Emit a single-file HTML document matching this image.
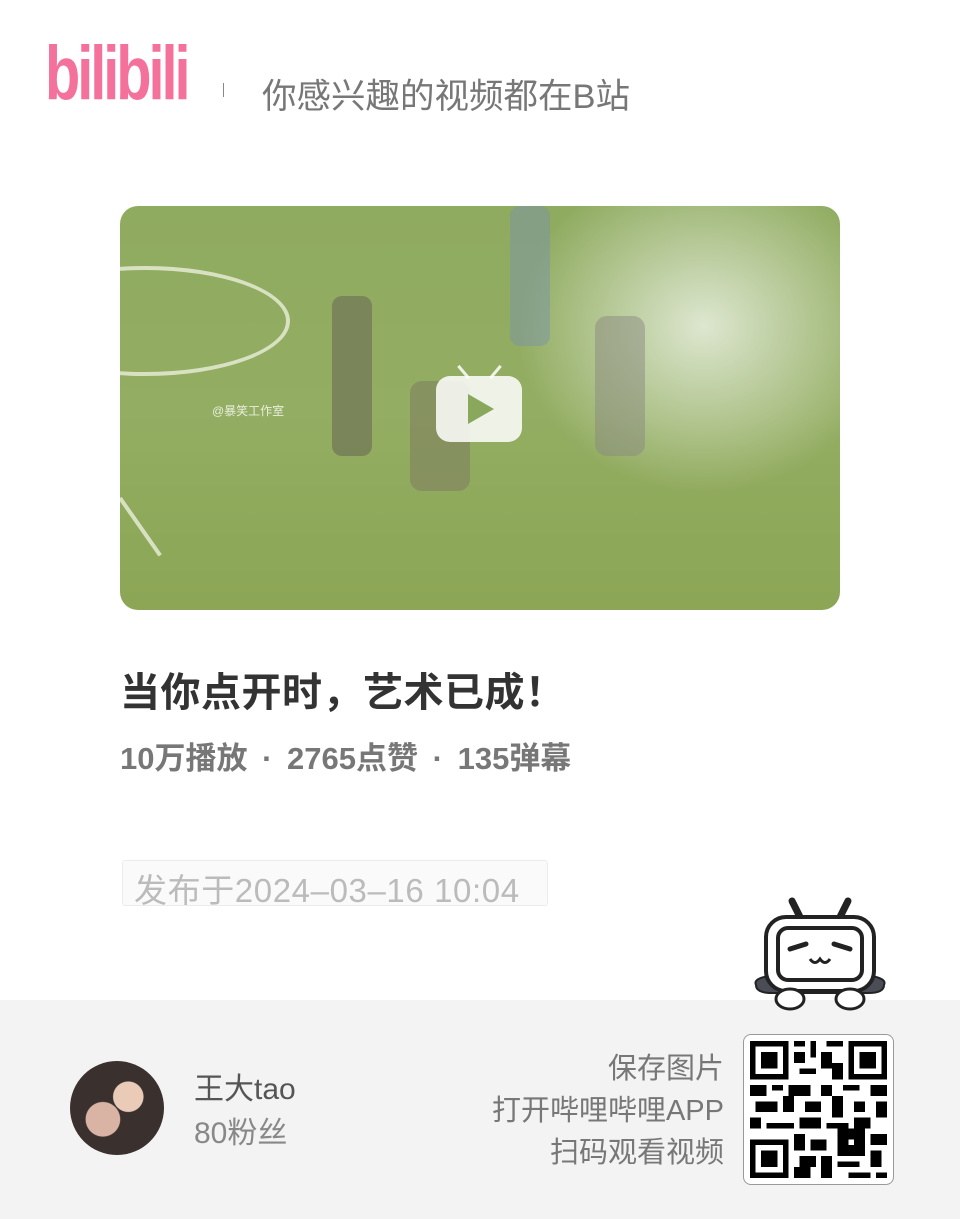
<!DOCTYPE html>
<html><head><meta charset="utf-8"><style>
*{margin:0;padding:0;box-sizing:border-box}
body{width:960px;height:1219px;background:#fff;position:relative;overflow:hidden;font-family:"Liberation Sans","Noto Sans CJK SC",sans-serif}
.a{position:absolute;white-space:nowrap}
</style></head><body>
<div class="a" style="left:45px;top:30px;font-size:76px;font-weight:bold;color:#f4719b;letter-spacing:-4px;font-family:'Liberation Sans',sans-serif;transform:scaleX(0.76);transform-origin:left top">bilibili</div>
<div class="a" style="left:223px;top:83px;width:1px;height:14px;background:#888"></div>
<div class="a" style="left:262px;top:68px;font-size:34.5px;color:#777">你感兴趣的视频都在B站</div>

<div class="a" style="left:120px;top:206px;width:720px;height:404px;border-radius:18px;overflow:hidden;background:linear-gradient(180deg,#8fab60 0%,#93ad62 50%,#8ca656 100%)">
 <div class="a" style="left:380px;top:0px;width:340px;height:300px;background:radial-gradient(ellipse at 60% 40%,rgba(240,245,235,.8),rgba(240,245,235,0) 65%)"></div>
 <div class="a" style="left:-120px;top:60px;width:290px;height:110px;border:4px solid #d8e2c2;border-radius:50%"></div>
 <div class="a" style="left:0;top:290px;width:70px;height:4px;background:#d8e2c2;transform:rotate(55deg);transform-origin:left"></div>
 <div class="a" style="left:212px;top:90px;width:40px;height:160px;background:#6b6a55;border-radius:10px;opacity:.6"></div>
 <div class="a" style="left:390px;top:0;width:40px;height:140px;background:#7a93a8;border-radius:10px;opacity:.5"></div>
 <div class="a" style="left:290px;top:175px;width:60px;height:110px;background:#7d7b60;border-radius:12px;opacity:.55"></div>
 <div class="a" style="left:475px;top:110px;width:50px;height:140px;background:#8a8a80;border-radius:12px;opacity:.5"></div>
 <div class="a" style="left:92px;top:196px;color:#e8eedd;font-size:12px">@暴笑工作室</div>
 <div class="a" style="left:316px;top:170px;width:86px;height:66px;background:rgba(255,255,255,.85);border-radius:14px"></div>
 <div class="a" style="left:342px;top:158px;width:3px;height:16px;background:rgba(255,255,255,.85);transform:rotate(-40deg)"></div>
 <div class="a" style="left:374px;top:158px;width:3px;height:16px;background:rgba(255,255,255,.85);transform:rotate(40deg)"></div>
 <div class="a" style="left:348px;top:188px;width:0;height:0;border-left:26px solid #8aa85b;border-top:15px solid transparent;border-bottom:15px solid transparent"></div>
</div>

<div class="a" style="left:120px;top:660px;font-size:40px;font-weight:bold;color:#333;letter-spacing:0.5px">当你点开时，艺术已成！</div>
<div class="a" style="left:120px;top:733px;font-size:31px;font-weight:bold;color:#777">10万播放 <span style="margin:0 6px">·</span> 2765点赞 <span style="margin:0 6px">·</span> 135弹幕</div>
<div class="a" style="left:122px;top:860px;width:426px;height:46px;border:1px solid #ececec;border-radius:3px;background:#fafafa"></div>
<div class="a" style="left:134px;top:864px;font-size:33px;color:#bbb;letter-spacing:0.6px">发布于2024–03–16 10:04</div>

<div class="a" style="left:0;top:1000px;width:960px;height:219px;background:#f3f3f3"></div>
<div class="a" style="left:70px;top:1061px;width:94px;height:94px;border-radius:50%;background:radial-gradient(circle at 62% 38%,#e9cbb8 0 18%,transparent 19%),radial-gradient(circle at 35% 62%,#d9b4a5 0 20%,transparent 21%),#3a302e"></div>
<div class="a" style="left:194px;top:1064px;font-size:30px;color:#555">王大tao</div>
<div class="a" style="left:194px;top:1108px;font-size:30px;color:#888">80粉丝</div>
<div class="a" style="right:236px;top:1048px;font-size:29px;color:#777;text-align:right;line-height:42px">保存图片<br>打开哔哩哔哩APP<br>扫码观看视频</div>

<svg class="a" style="left:748px;top:893px" width="144" height="122" viewBox="0 0 144 122">
 <path d="M44 8 L54 28 M100 8 L90 28" stroke="#222" stroke-width="7" stroke-linecap="round"/>
 <path d="M8 92 Q4 84 30 82 L114 82 Q140 84 136 92 Q136 100 120 100 L24 100 Q8 100 8 92Z" fill="#4a4d55" stroke="#222" stroke-width="2"/>
 <rect x="18" y="24" width="108" height="74" rx="20" fill="#fff" stroke="#222" stroke-width="4"/>
 <rect x="30" y="35" width="84" height="52" rx="10" fill="#fff" stroke="#222" stroke-width="4"/>
 <path d="M42 56 L58 51 M86 51 L102 56" stroke="#222" stroke-width="5" stroke-linecap="round"/>
 <path d="M62 66 q5 7 10 0 q5 7 10 0" stroke="#222" stroke-width="3" fill="none"/>
 <ellipse cx="42" cy="106" rx="14" ry="10" fill="#fff" stroke="#222" stroke-width="3"/>
 <ellipse cx="102" cy="106" rx="14" ry="10" fill="#fff" stroke="#222" stroke-width="3"/>
</svg>

<div class="a" style="left:743px;top:1034px;width:151px;height:151px;border:1px solid #999;border-radius:8px;background:#fff"></div>
<svg class="a" style="left:750px;top:1041px" width="137" height="137" viewBox="0 0 25 25" shape-rendering="crispEdges">
 <g fill="#000">
 <path d="M0 0h7v7h-7zM1 1v5h5v-5zM2 2h3v3h-3z" fill-rule="evenodd"/>
 <path d="M18 0h7v7h-7zM19 1v5h5v-5zM20 2h3v3h-3z" fill-rule="evenodd"/>
 <path d="M0 18h7v7h-7zM1 19v5h5v-5zM2 20h3v3h-3z" fill-rule="evenodd"/>
 <rect x="8" y="0" width="2" height="1"/><rect x="11" y="0" width="1" height="3"/><rect x="14" y="0" width="3" height="1"/>
 <rect x="8" y="2" width="2" height="2"/><rect x="13" y="2" width="2" height="3"/><rect x="9" y="5" width="3" height="1"/><rect x="15" y="4" width="2" height="3"/>
 <rect x="0" y="8" width="3" height="2"/><rect x="4" y="8" width="2" height="1"/><rect x="7" y="8" width="4" height="2"/><rect x="13" y="8" width="2" height="2"/><rect x="17" y="8" width="3" height="1"/><rect x="22" y="8" width="3" height="2"/>
 <rect x="1" y="11" width="4" height="2"/><rect x="6" y="10" width="2" height="3"/><rect x="10" y="11" width="3" height="2"/><rect x="15" y="10" width="2" height="4"/><rect x="19" y="11" width="2" height="2"/><rect x="23" y="11" width="2" height="3"/>
 <rect x="0" y="14" width="2" height="2"/><rect x="3" y="15" width="5" height="1"/><rect x="9" y="14" width="4" height="2"/><rect x="14" y="15" width="4" height="1"/><rect x="19" y="14" width="3" height="2"/>
 <rect x="8" y="17" width="2" height="3"/><rect x="11" y="18" width="3" height="2"/><rect x="16" y="16" width="5" height="5"/><rect x="22" y="17" width="3" height="2"/>
 <rect x="9" y="21" width="3" height="2"/><rect x="13" y="21" width="2" height="4"/><rect x="22" y="20" width="2" height="3"/><rect x="8" y="23" width="3" height="2"/><rect x="16" y="22" width="4" height="1"/><rect x="18" y="24" width="4" height="1"/><rect x="23" y="24" width="2" height="1"/>
 </g>
 <rect x="18" y="18" width="1" height="1" fill="#fff"/>
</svg>
</body></html>
